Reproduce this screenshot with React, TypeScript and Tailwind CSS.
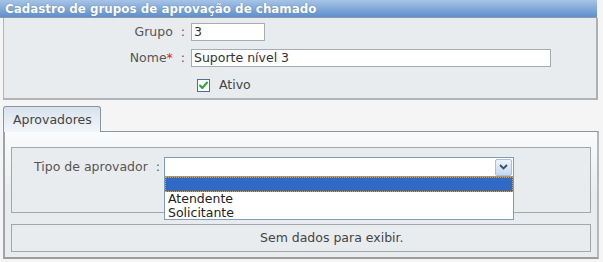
import React from "react";

// Tela de cadastro de grupos de aprovação (estilo formulário clássico)
const FONT = "font-['DejaVu_Sans','Verdana',sans-serif]";

function Field({ label, required, children }: { label: string; required?: boolean; children: React.ReactNode }) {
  return (
    <div className="flex items-center h-[18px]">
      <div className="w-[184px] pr-[3px] text-right text-[#555] whitespace-nowrap">
        {label}
        {required && <span className="text-[#e02020]">*</span>}
        <span>&nbsp; :</span>
      </div>
      <div className="ml-[3px]">{children}</div>
    </div>
  );
}

function CheckIcon() {
  return (
    <svg width="13" height="13" viewBox="0 0 13 13" className="block">
      <rect x="0.5" y="0.5" width="12" height="12" fill="#fbfdff" stroke="#4f6f8f" />
      <path d="M3 6.5 L5.3 9 L10 3.6" fill="none" stroke="#2aa52a" strokeWidth="2" strokeLinecap="round" strokeLinejoin="round" />
    </svg>
  );
}

function SelectArrow() {
  return (
    <div className="w-[17px] h-[17px] border border-[#a9bfd9] rounded-[2px] bg-gradient-to-b from-[#eef4fc] to-[#c5d7ef] flex items-center justify-center">
      <svg width="9" height="6" viewBox="0 0 9 6">
        <path d="M1 1 L4.5 4.5 L8 1" fill="none" stroke="#3c4f6c" strokeWidth="1.8" />
      </svg>
    </div>
  );
}

export default function App() {
  return (
    <div className={`w-[603px] h-[262px] bg-[#f5f5f5] text-[12.5px] leading-[14px] ${FONT}`}>
      {/* Cabeçalho */}
      <div className="w-[597px] h-[18px] bg-gradient-to-b from-[#a7c4e6] to-[#5f8fcc] border-b border-[#8a9aab] flex items-center pl-[5px]">
        <span className="text-white text-[11.9px] font-bold [text-shadow:0_0_1px_#4a6a95]">Cadastro de grupos de aprovação de chamado</span>
      </div>

      {/* Formulário */}
      <div className="ml-[3px] w-[595px] h-[82px] bg-[#e9ecee] border-x border-b-2 border-l-[#b5b5b5] border-r-[#b0b0b0] border-r-2 border-b-[#b3b3b3] pt-[5px]">
        <div className="flex flex-col gap-[8px]">
          <Field label="Grupo">
            <div className="w-[74px] h-[18px] bg-white border border-[#a5acb2] px-[2px] text-[#333] flex items-center">3</div>
          </Field>
          <Field label="Nome" required>
            <div className="w-[360px] h-[18px] bg-white border border-[#a5acb2] px-[2px] text-[#333] flex items-center">Suporte nível 3</div>
          </Field>
          <div className="flex items-center pl-[193px] pt-[3px] gap-[9px]">
            <CheckIcon />
            <span className="text-[#444]">Ativo</span>
          </div>
        </div>
      </div>

      {/* Abas */}
      <div className="mt-[6px] ml-[3px] w-[596px]">
        <div className="flex items-end h-[26px]">
          <div className="w-[98px] h-[26px] rounded-t-[3px] border border-b-0 border-[#8c949c] bg-gradient-to-b from-[#d8e2ec] to-[#f2f6fa] flex items-center pl-[9px] pt-[1px] text-[#444] relative z-10">
            Aprovadores
          </div>
          <div className="flex-1 border-b border-[#8c949c]" />
        </div>

        <div className="relative -mt-px h-[128px] border-l-2 border-r-2 border-b-2 border-t border-l-[#a0a4a8] border-r-[#b8b8b8] border-b-[#9c9c9c] border-t-[#8c949c] bg-gradient-to-b from-[#fafbfc] via-[#e9ecee] to-[#e9ecee] px-[6px] pt-[15px]">
          {/* Tipo de aprovador */}
          <div className="h-[66px] border border-[#a6a6a6] bg-[#e9ecee] flex items-start pt-[9px]">
            <div className="w-[152px] text-right pr-[4px] text-[#555] pt-[3px] whitespace-nowrap">Tipo de aprovador&nbsp; :</div>
            <div className="relative">
              <div className="w-[350px] h-[20px] bg-white border border-[#7f9db9] flex items-center justify-end pr-[1px]">
                <SelectArrow />
              </div>
              <div className="absolute left-0 top-[19px] w-[350px] h-[44px] bg-white border border-[#7f9db9] z-20 text-[#222]">
                <div className="h-[15px] bg-[#316ac5] border border-dotted border-[#e0a040]" />
                <div className="h-[14px] pl-[3px] flex items-center">Atendente</div>
                <div className="h-[13px] pl-[3px] flex items-center">Solicitante</div>
              </div>
            </div>
          </div>

          {/* Sem dados */}
          <div className="mt-[11px] h-[28px] border border-[#a6a6a6] bg-[#e9ecee] flex items-center pl-[248px] text-[#444]">
            Sem dados para exibir.
          </div>
        </div>
      </div>
    </div>
  );
}
